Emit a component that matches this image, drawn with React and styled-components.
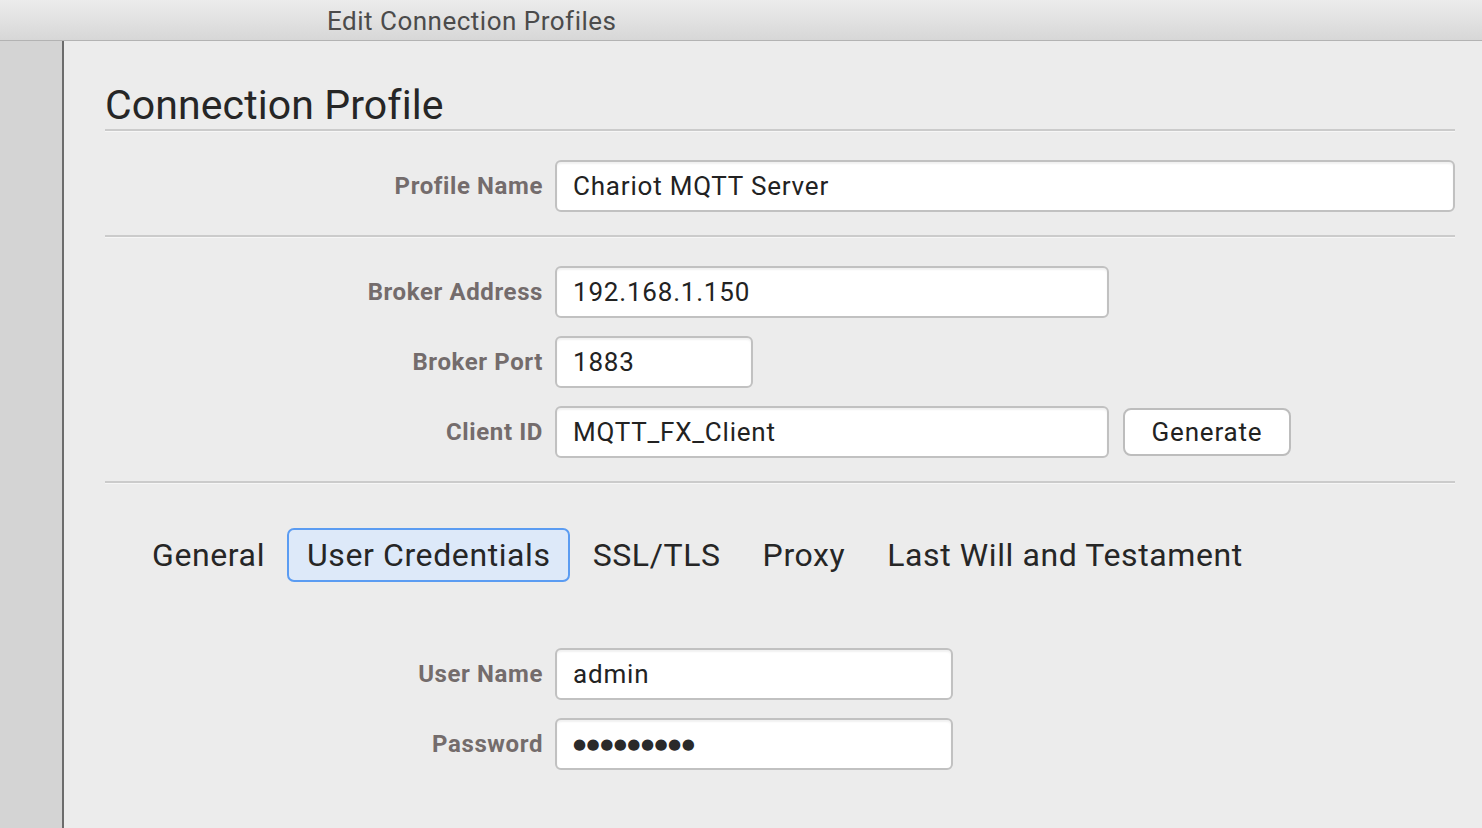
import styled, { createGlobalStyle } from "styled-components";

const GlobalStyle = createGlobalStyle`
    html, body {
        margin: 0;
        padding: 0;
        background: #ececec;
    }
    body {
        font-family: Roboto, "Noto Sans", "Liberation Sans", sans-serif;
        color: #262626;
    }
`;

const tabs = ["General", "User Credentials", "SSL/TLS", "Proxy", "Last Will and Testament"];

export default function App() {
    return (
        <>
            <GlobalStyle />
            <Window>
                <TitleBar>Edit Connection Profiles</TitleBar>
                <Body>
                    <Sidebar />
                    <Main>
                        <Heading>Connection Profile</Heading>
                        <Divider />
                        <Section>
                            <Row>
                                <Label>Profile Name</Label>
                                <Field $width={900}>Chariot MQTT Server</Field>
                            </Row>
                        </Section>
                        <Divider />
                        <Section>
                            <Row>
                                <Label>Broker Address</Label>
                                <Field $width={554}>192.168.1.150</Field>
                            </Row>
                            <Row>
                                <Label>Broker Port</Label>
                                <Field $width={198}>1883</Field>
                            </Row>
                            <Row>
                                <Label>Client ID</Label>
                                <Field $width={554}>MQTT_FX_Client</Field>
                                <Button>Generate</Button>
                            </Row>
                        </Section>
                        <Divider />
                        <TabBar>
                            {tabs.map((t) => (
                                <Tab key={t} $active={t === "User Credentials"}>{t}</Tab>
                            ))}
                        </TabBar>
                        <Credentials>
                            <Row>
                                <Label>User Name</Label>
                                <Field $width={398}>admin</Field>
                            </Row>
                            <Row>
                                <Label>Password</Label>
                                <Field $width={398}><Dots>●●●●●●●●●</Dots></Field>
                            </Row>
                        </Credentials>
                    </Main>
                </Body>
            </Window>
        </>
    );
}

const Window = styled.div`
    height: 828px;
    display: flex;
    flex-direction: column;
    overflow: hidden;
`;

const TitleBar = styled.div`
    height: 41px;
    flex-shrink: 0;
    box-sizing: border-box;
    border-bottom: 1px solid #b3b3b3;
    background: linear-gradient(#ececec, #d7d7d7);
    display: flex;
    align-items: center;
    padding: 2px 0 0 327px;
    font-size: 26px;
    letter-spacing: 0.5px;
    color: #4b4b4b;
`;

const Body = styled.div`
    flex: 1;
    display: flex;
`;

const Sidebar = styled.div`
    width: 62px;
    background: #d4d4d4;
    border-right: 2px solid #6c6c6c;
`;

const Main = styled.div`
    flex: 1;
    padding: 0 27px 0 41px;
    background: #ececec;
`;

const Heading = styled.h1`
    margin: 41px 0 0 0;
    font-size: 41px;
    line-height: 47px;
    font-weight: 400;
    letter-spacing: 0.1px;
    color: #262626;
`;

const Divider = styled.div`
    border-top: 2px solid #cbcbcb;
    border-bottom: 1px solid #f6f6f6;
`;

const Section = styled.div`
    padding: 28px 0 23px 0;
    display: flex;
    flex-direction: column;
    gap: 18px;
`;

const Row = styled.div`
    display: flex;
    align-items: center;
`;

const Label = styled.div`
    width: 438px;
    margin-right: 12px;
    text-align: right;
    font-size: 24px;
    font-weight: 700;
    letter-spacing: 0.6px;
    color: #746c6c;
`;

const Field = styled.div`
    width: ${(p) => p.$width}px;
    height: 52px;
    box-sizing: border-box;
    display: flex;
    align-items: center;
    padding-left: 16px;
    background: #fff;
    border: 2px solid #c1c1c1;
    border-radius: 6px;
    box-shadow: inset 0 2px 2px rgba(0, 0, 0, 0.06);
    font-size: 26px;
    letter-spacing: 0.8px;
    color: #222;
`;

const Dots = styled.span`
    font-family: "DejaVu Sans", sans-serif;
    font-size: 15px;
    letter-spacing: 0.5px;
    color: #2a2a2a;
`;

const Button = styled.div`
    margin-left: 14px;
    width: 168px;
    height: 48px;
    box-sizing: border-box;
    display: flex;
    align-items: center;
    justify-content: center;
    background: #fff;
    border: 2px solid #bdbdbd;
    border-radius: 8px;
    font-size: 26px;
    letter-spacing: 0.8px;
    color: #222;
`;

const TabBar = styled.div`
    margin-top: 44px;
    padding-left: 27px;
    display: flex;
    gap: 3px;
`;

const Tab = styled.div`
    height: 54px;
    box-sizing: border-box;
    display: flex;
    align-items: center;
    padding: 0 17px 0 18px;
    font-size: 32px;
    letter-spacing: 0.6px;
    color: #262626;
    border: 2px solid ${(p) => (p.$active ? "#5b9cf2" : "transparent")};
    border-radius: 7px;
    background: ${(p) => (p.$active ? "#dde9f9" : "transparent")};
`;

const Credentials = styled.div`
    margin-top: 66px;
    display: flex;
    flex-direction: column;
    gap: 18px;
`;
